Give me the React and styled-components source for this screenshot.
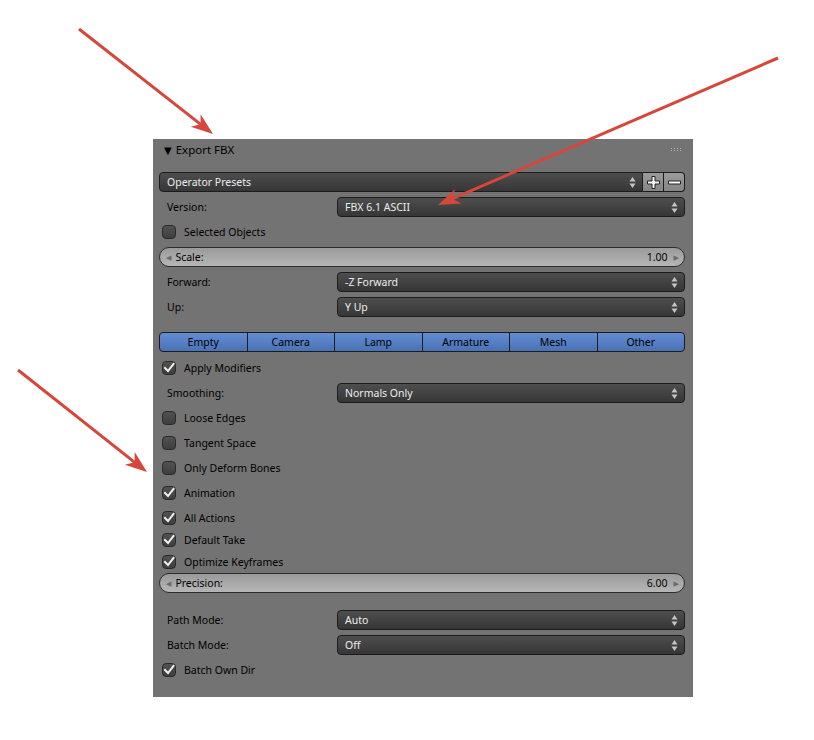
import React from "react";
import styled, { createGlobalStyle } from "styled-components";

const Global = createGlobalStyle`
  html, body { margin: 0; padding: 0; background: #ffffff; }
  body { font-family: "Noto Sans", "DejaVu Sans", sans-serif; font-size: 10.5px; line-height: 14px; }
`;

const Page = styled.div`
  position: relative;
  width: 814px;
  height: 740px;
  padding: 139px 0 0 153px;
  box-sizing: border-box;
`;

const Panel = styled.div`
  width: 540px;
  height: 558px;
  background: #737373;
  box-sizing: border-box;
  padding: 0 8px 0 6px;
  display: flex;
  flex-direction: column;
`;

const Header = styled.div`
  height: 22px;
  display: flex;
  align-items: center;
  padding-left: 5px;
  padding-bottom: 1px;
  box-sizing: border-box;
  margin-bottom: 11px;
  color: #000;
  font-size: 11.5px;
`;

const HeaderTitle = styled.span`
  flex: 1;
  display: flex;
  align-items: center;
  gap: 4px;
`;

const Tri = styled.span`
  font-size: 10px;
  line-height: 1;
`;

const Row = styled.div`
  height: 20px;
  display: flex;
  align-items: center;
  margin-top: ${(p) => p.$mt ?? 5}px;
  flex-shrink: 0;
`;

const Label = styled.div`
  width: 178px;
  padding-left: 8px;
  padding-bottom: 1px;
  box-sizing: border-box;
  color: #000;
`;

const Dropdown = styled.div`
  flex: 1;
  height: 20px;
  box-sizing: border-box;
  display: flex;
  align-items: center;
  padding: 0 6px 0 7px;
  border: 1px solid #1c1c1c;
  border-radius: ${(p) => (p.$joined ? "4px 0 0 4px" : "4px")};
  background: linear-gradient(#4e4e4e, #363636);
  color: #ececec;
`;

const DropText = styled.span`
  flex: 1;
  padding-bottom: 1px;
`;

const Btn = styled.div`
  width: 21px;
  height: 20px;
  box-sizing: border-box;
  display: flex;
  align-items: center;
  justify-content: center;
  border: 1px solid #1c1c1c;
  border-left: none;
  border-radius: ${(p) => (p.$last ? "0 4px 4px 0" : "0")};
  background: linear-gradient(#9a9a9a, #868686);
`;

const Slider = styled.div`
  flex: 1;
  height: 20px;
  box-sizing: border-box;
  display: flex;
  align-items: center;
  padding: 0 5px 0 6px;
  border: 1px solid #2c2c2c;
  border-radius: 10px;
  background: linear-gradient(#9a9a9a, #b6b6b6);
  color: #000;
`;

const SliderName = styled.span`
  flex: 1;
  margin-left: 4px;
  padding-bottom: 1px;
`;

const SliderValue = styled.span`
  margin-right: 6px;
  padding-bottom: 1px;
`;

const Small = styled.span`
  color: #6a6a6a;
  font-size: 7px;
  line-height: 1;
`;

const Tabs = styled.div`
  flex: 1;
  height: 20px;
  box-sizing: border-box;
  display: flex;
  border: 1px solid #1c1c1c;
  border-radius: 4px;
  overflow: hidden;
  background: linear-gradient(#628dd2, #4a72b6);
`;

const Tab = styled.div`
  flex: 1;
  display: flex;
  align-items: center;
  justify-content: center;
  padding-bottom: 1px;
  color: #000;
  border-left: ${(p) => (p.$first ? "none" : "1px solid #1c1c1c")};
`;

const CheckRow = styled(Row)`
  padding-left: 3px;
  gap: 8px;
  color: #000;
`;

const CheckText = styled.span`
  padding-bottom: 1px;
`;

const Box = styled.div`
  width: 14px;
  height: 14px;
  box-sizing: border-box;
  border: 1px solid #2a2a2a;
  border-radius: 4px;
  background: linear-gradient(#525252, #3e3e3e);
  display: flex;
  align-items: center;
  justify-content: center;
  margin-bottom: 1px;
`;

const UpDown = () => (
  <svg width="7" height="13" viewBox="0 0 7 13">
    <path d="M3.5 1 L6.5 5.5 L0.5 5.5 Z" fill="#c4c4c4" />
    <path d="M3.5 12 L6.5 7.5 L0.5 7.5 Z" fill="#c4c4c4" />
  </svg>
);

const Check = ({ on }) => (
  <Box>
    {on && (
      <svg width="12" height="12" viewBox="0 0 12 12">
        <path d="M2 6 L5 9 L10.5 2" stroke="#f0f0f0" strokeWidth="2" fill="none" strokeLinecap="square" />
      </svg>
    )}
  </Box>
);

const Grip = () => (
  <svg width="11" height="4" viewBox="0 0 11 4" style={{ marginRight: 3 }}>
    {[0, 3, 6, 9].map((x) =>
      [0, 2].map((y) => <rect key={x + "-" + y} x={x} y={y} width="1" height="1" fill="#b0b0b0" />)
    )}
  </svg>
);

const PlusIcon = () => (
  <svg width="15" height="15" viewBox="0 0 15 15">
    <path d="M6 1.5 H9 V6 H13.5 V9 H9 V13.5 H6 V9 H1.5 V6 H6 Z" fill="#fafafa" stroke="#222" strokeWidth="1" />
  </svg>
);

const MinusIcon = () => (
  <svg width="15" height="15" viewBox="0 0 15 15">
    <path d="M1.5 6 H13.5 V9 H1.5 Z" fill="#fafafa" stroke="#222" strokeWidth="1" />
  </svg>
);

const Overlay = styled.svg`
  position: absolute;
  left: 0;
  top: 0;
  pointer-events: none;
`;

function arrowHead(x1, y1, x2, y2, len = 22, half = 8) {
  const dx = x2 - x1;
  const dy = y2 - y1;
  const d = Math.hypot(dx, dy);
  const ux = dx / d;
  const uy = dy / d;
  const bx = x2 - ux * len;
  const by = y2 - uy * len;
  const nx = -uy;
  const ny = ux;
  const ix = x2 - ux * len * 0.72;
  const iy = y2 - uy * len * 0.72;
  return `${x2},${y2} ${bx + nx * half},${by + ny * half} ${ix},${iy} ${bx - nx * half},${by - ny * half}`;
}

const Arrow = ({ x1, y1, x2, y2 }) => {
  const d = Math.hypot(x2 - x1, y2 - y1);
  const ex = x2 - ((x2 - x1) / d) * 14;
  const ey = y2 - ((y2 - y1) / d) * 14;
  return (
    <g>
      <line x1={x1} y1={y1} x2={ex} y2={ey} stroke="#d5473a" strokeWidth="3" />
      <polygon points={arrowHead(x1, y1, x2, y2)} fill="#d5473a" />
    </g>
  );
};

const Select = ({ label, value, mt }) => (
  <Row $mt={mt}>
    <Label>{label}</Label>
    <Dropdown>
      <DropText>{value}</DropText>
      <UpDown />
    </Dropdown>
  </Row>
);

const Toggle = ({ label, on, mt }) => (
  <CheckRow $mt={mt}>
    <Check on={on} />
    <CheckText>{label}</CheckText>
  </CheckRow>
);

const NumSlider = ({ name, value, mt }) => (
  <Row $mt={mt}>
    <Slider>
      <Small>◀</Small>
      <SliderName>{name}</SliderName>
      <SliderValue>{value}</SliderValue>
      <Small>▶</Small>
    </Slider>
  </Row>
);

export default function App() {
  return (
    <>
      <Global />
      <Page>
        <Panel>
          <Header>
            <HeaderTitle>
              <Tri>▼</Tri>
              Export FBX
            </HeaderTitle>
            <Grip />
          </Header>
          <Row $mt={0}>
            <Dropdown $joined>
              <DropText>Operator Presets</DropText>
              <UpDown />
            </Dropdown>
            <Btn>
              <PlusIcon />
            </Btn>
            <Btn $last>
              <MinusIcon />
            </Btn>
          </Row>
          <Select label="Version:" value="FBX 6.1 ASCII" />
          <Toggle label="Selected Objects" />
          <NumSlider name="Scale:" value="1.00" />
          <Select label="Forward:" value="-Z Forward" />
          <Select label="Up:" value="Y Up" />
          <Row $mt={15}>
            <Tabs>
              {["Empty", "Camera", "Lamp", "Armature", "Mesh", "Other"].map((t, i) => (
                <Tab key={t} $first={i === 0}>
                  {t}
                </Tab>
              ))}
            </Tabs>
          </Row>
          <Toggle label="Apply Modifiers" on mt={6} />
          <Select label="Smoothing:" value="Normals Only" />
          <Toggle label="Loose Edges" />
          <Toggle label="Tangent Space" />
          <Toggle label="Only Deform Bones" />
          <Toggle label="Animation" on />
          <Toggle label="All Actions" on />
          <Toggle label="Default Take" on mt={2} />
          <Toggle label="Optimize Keyframes" on mt={2} />
          <NumSlider name="Precision:" value="6.00" mt={1} />
          <Select label="Path Mode:" value="Auto" mt={17} />
          <Select label="Batch Mode:" value="Off" />
          <Toggle label="Batch Own Dir" on />
        </Panel>
        <Overlay width="814" height="740" viewBox="0 0 814 740">
          <Arrow x1={79} y1={29} x2={213} y2={134} />
          <Arrow x1={778} y1={58} x2={438} y2={205} />
          <Arrow x1={18} y1={370} x2={147} y2={472} />
        </Overlay>
      </Page>
    </>
  );
}
